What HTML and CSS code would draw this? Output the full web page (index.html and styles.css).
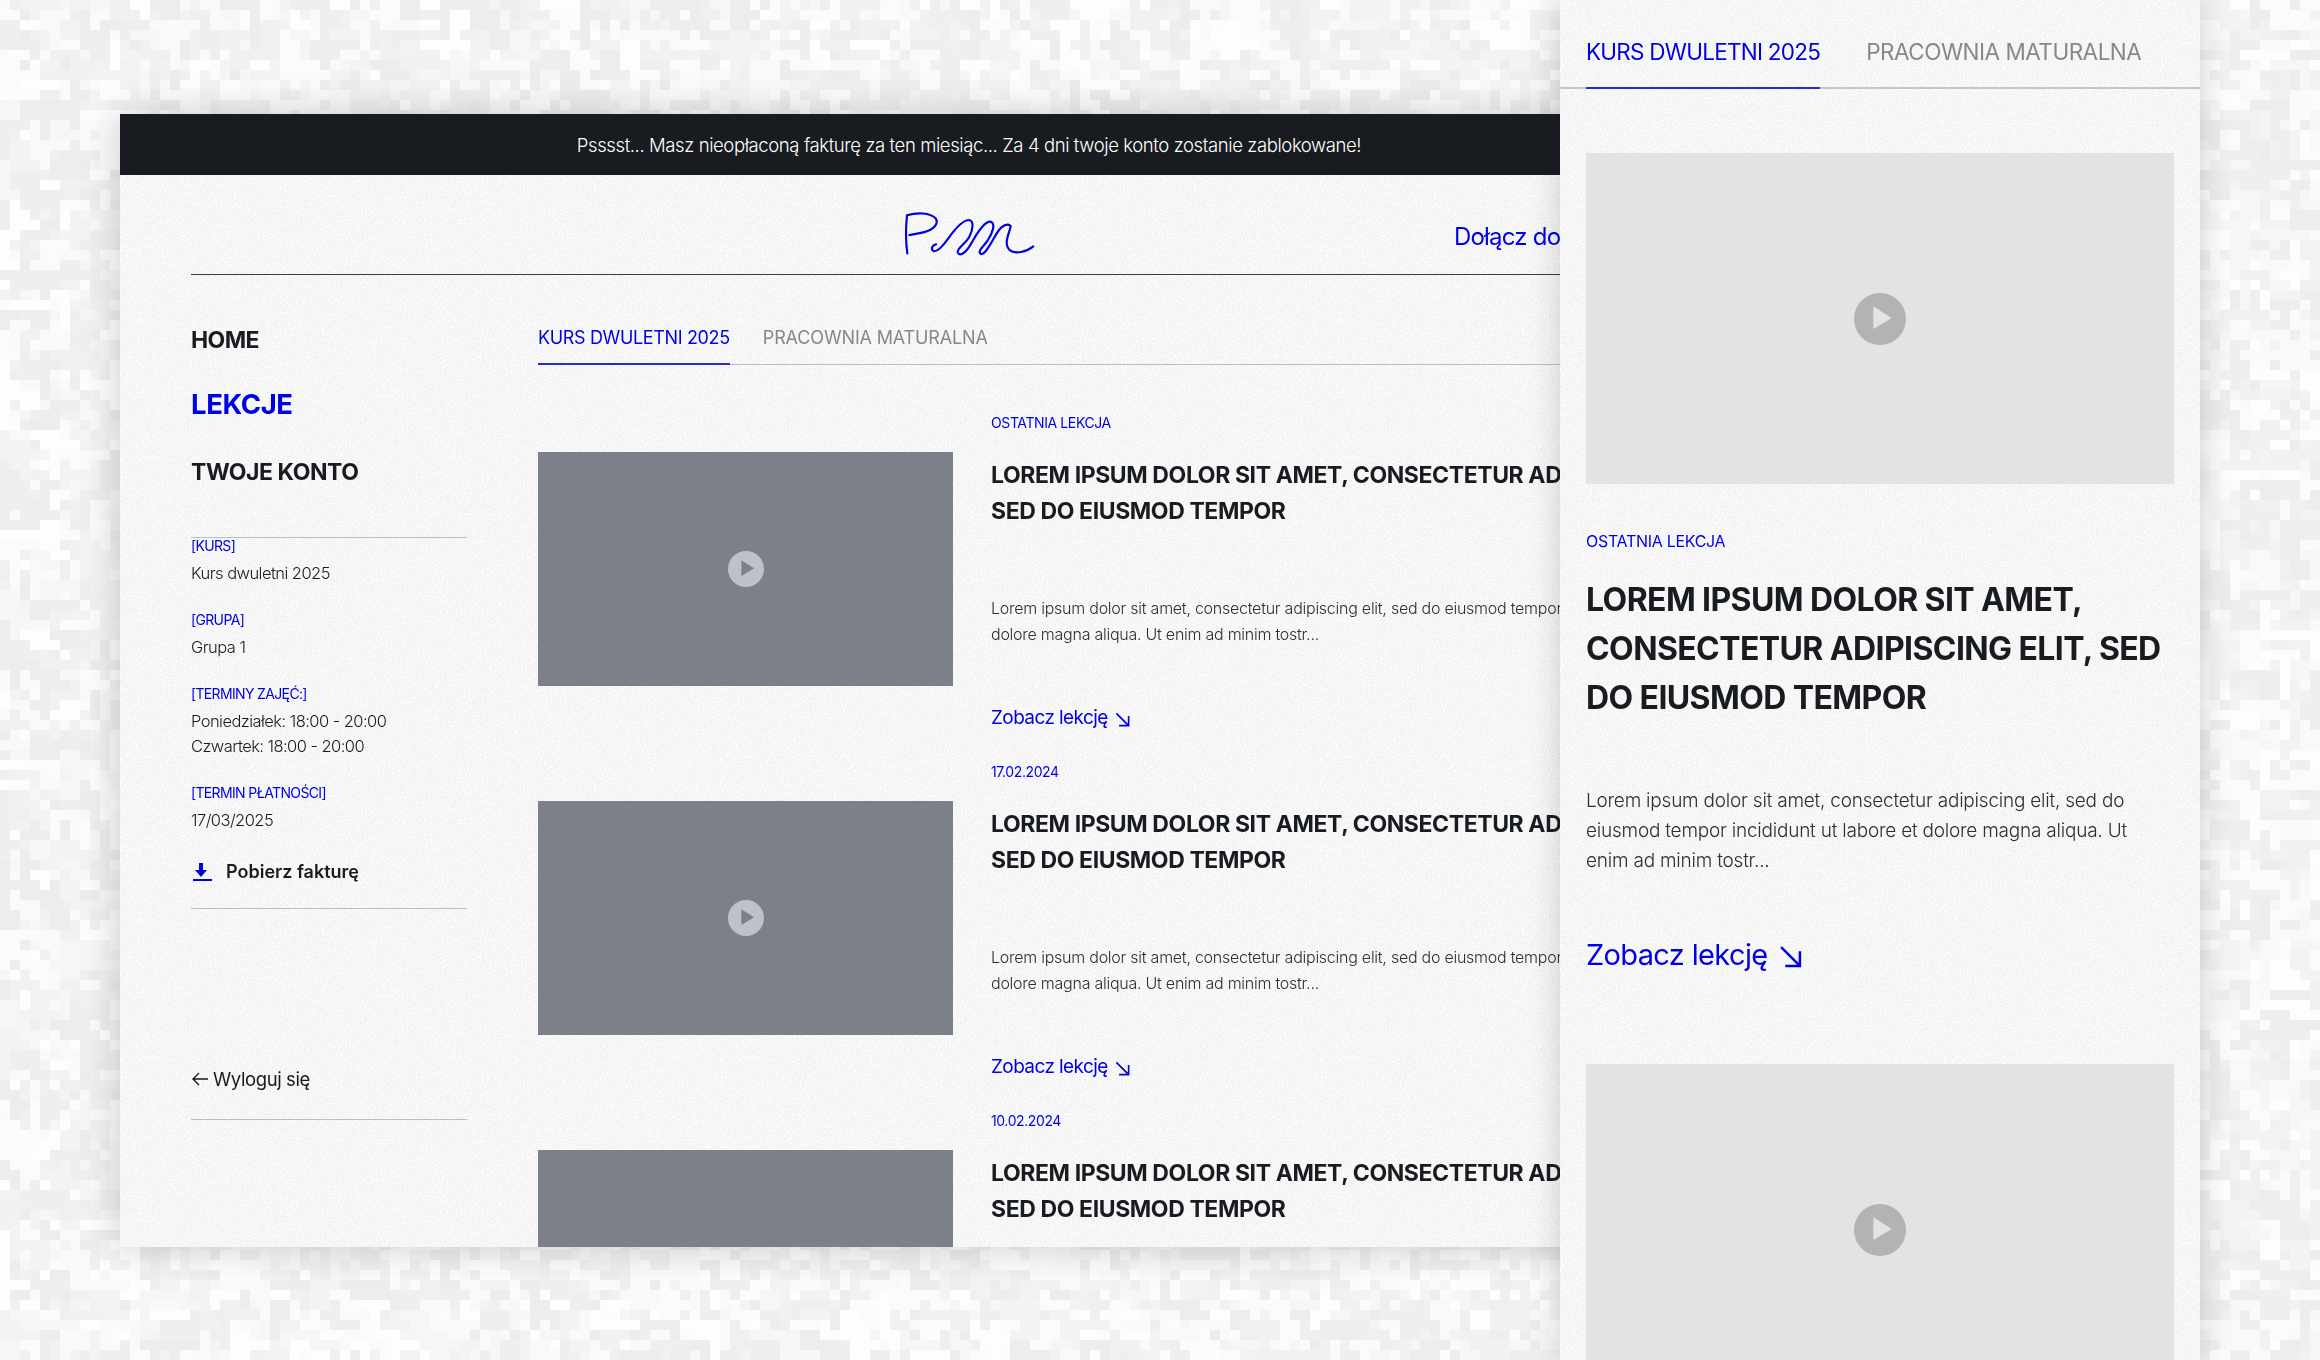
FILE: index.html
```html
<!DOCTYPE html>
<html lang="pl">
<head>
  <meta charset="UTF-8" />
  <title>Lekcje</title>
  <link rel="stylesheet" href="styles.css">
</head>
<body>
  <canvas class="mosaic" id="mosaic" width="2320" height="1360"></canvas>

  <svg class="icon-defs" width="0" height="0">
    <symbol id="play" viewBox="0 0 52 52">
      <circle class="play-disc" cx="26" cy="26" r="26" />
      <path class="play-tri" d="M19.3 13.3 L37.7 25 L19.3 36 Z" />
    </symbol>
    <symbol id="arrow-se" viewBox="0 0 22 22">
      <path d="M2 2 L20 20 M20 6 V20 H6" fill="none" stroke="currentColor" stroke-width="2.4" />
    </symbol>
  </svg>

  <!-- Desktop window -->
  <div class="desktop">
    <div class="banner">Psssst... Masz nieopłaconą fakturę za ten miesiąc... Za 4 dni twoje konto zostanie zablokowane!</div>

    <header class="top-bar">
      <span></span>
      <svg class="logo" viewBox="0 0 420 180" width="140" height="60">
        <path d="M22 145 C17 110 17 70 21 31 C50 22 90 22 107 40 C118 56 100 75 70 82 C55 86 40 88 28 90" />
        <path d="M108 118 C96 120 92 132 100 138 C110 142 125 128 145 100 C165 72 190 45 207 45 C222 47 220 72 208 95 C195 118 170 130 173 142 C180 158 200 142 218 108 C235 78 255 48 272 50 C288 55 278 85 262 108 C245 130 232 140 243 147 C256 150 275 110 292 82 C305 62 325 52 332 64 C328 85 310 115 328 134 C345 150 380 140 400 124" />
      </svg>
      <a class="join-link" href="#">Dołącz do</a>
    </header>

    <div class="layout">
      <aside class="sidebar">
        <nav class="side-nav">
          <a class="nav-home" href="#">HOME</a>
          <a class="nav-lessons" href="#">LEKCJE</a>
          <a class="nav-account" href="#">TWOJE KONTO</a>
        </nav>

        <div class="account-box">
          <div class="info-label">[KURS]</div>
          <div class="info-value">Kurs dwuletni 2025</div>
          <div class="info-label">[GRUPA]</div>
          <div class="info-value">Grupa 1</div>
          <div class="info-label">[TERMINY ZAJĘĆ:]</div>
          <div class="info-value">Poniedziałek: 18:00 - 20:00<br>Czwartek: 18:00 - 20:00</div>
          <div class="info-label">[TERMIN PŁATNOŚCI]</div>
          <div class="info-value">17/03/2025</div>
          <a class="invoice" href="#">
            <svg class="invoice-icon" viewBox="0 0 20 20" width="20" height="20">
              <path d="M6 1 H10 V8 H14 L8 15 L2 8 H6 Z" />
              <rect x="0" y="17" width="19" height="2" />
            </svg>
            Pobierz fakturę
          </a>
        </div>

        <a class="logout" href="#">
          <svg class="logout-icon" viewBox="0 0 16 14" width="16" height="14">
            <path d="M16 7 H1 M7 1 L1 7 L7 13" />
          </svg>
          Wyloguj się
        </a>
      </aside>

      <main class="lessons">
        <div class="tabs">
          <a class="tab active" href="#">KURS DWULETNI 2025</a>
          <a class="tab" href="#">PRACOWNIA MATURALNA</a>
        </div>

        <article class="lesson">
          <div class="thumb"><svg class="thumb-play"><use href="#play" /></svg></div>
          <div class="lesson-text">
            <div class="lesson-date">OSTATNIA LEKCJA</div>
            <h2 class="lesson-title">LOREM IPSUM DOLOR SIT AMET, CONSECTETUR ADIPISCING ELIT,<br>SED DO EIUSMOD TEMPOR</h2>
            <p class="lesson-desc">Lorem ipsum dolor sit amet, consectetur adipiscing elit, sed do eiusmod tempor incididunt ut labore et<br>dolore magna aliqua. Ut enim ad minim tostr...</p>
            <a class="lesson-link" href="#">Zobacz lekcję <svg class="link-arrow"><use href="#arrow-se" /></svg></a>
          </div>
        </article>

        <article class="lesson">
          <div class="thumb"><svg class="thumb-play"><use href="#play" /></svg></div>
          <div class="lesson-text">
            <div class="lesson-date">17.02.2024</div>
            <h2 class="lesson-title">LOREM IPSUM DOLOR SIT AMET, CONSECTETUR ADIPISCING ELIT,<br>SED DO EIUSMOD TEMPOR</h2>
            <p class="lesson-desc">Lorem ipsum dolor sit amet, consectetur adipiscing elit, sed do eiusmod tempor incididunt ut labore et<br>dolore magna aliqua. Ut enim ad minim tostr...</p>
            <a class="lesson-link" href="#">Zobacz lekcję <svg class="link-arrow"><use href="#arrow-se" /></svg></a>
          </div>
        </article>

        <article class="lesson">
          <div class="thumb"><svg class="thumb-play"><use href="#play" /></svg></div>
          <div class="lesson-text">
            <div class="lesson-date">10.02.2024</div>
            <h2 class="lesson-title">LOREM IPSUM DOLOR SIT AMET, CONSECTETUR ADIPISCING ELIT,<br>SED DO EIUSMOD TEMPOR</h2>
          </div>
        </article>
      </main>
    </div>
  </div>

  <!-- Mobile window -->
  <div class="mobile">
    <div class="mobile-tabs">
      <a class="mobile-tab active" href="#">KURS DWULETNI 2025</a>
      <a class="mobile-tab" href="#">PRACOWNIA MATURALNA</a>
    </div>

    <div class="mobile-body">
      <div class="mobile-thumb"><svg class="mobile-play"><use href="#play" /></svg></div>
      <div class="mobile-date">OSTATNIA LEKCJA</div>
      <h2 class="mobile-title">LOREM IPSUM DOLOR SIT AMET, CONSECTETUR ADIPISCING ELIT, SED DO EIUSMOD TEMPOR</h2>
      <p class="mobile-desc">Lorem ipsum dolor sit amet, consectetur adipiscing elit, sed do eiusmod tempor incididunt ut labore et dolore magna aliqua. Ut enim ad minim tostr...</p>
      <a class="mobile-link" href="#">Zobacz lekcję <svg class="mobile-arrow"><use href="#arrow-se" /></svg></a>
      <div class="mobile-thumb"><svg class="mobile-play"><use href="#play" /></svg></div>
    </div>
  </div>

  <script src="mosaic.js"></script>
</body>
</html>
```

FILE: styles.css
```css
* {
  box-sizing: border-box;
}

html,
body {
  margin: 0;
  height: 100%;
}

body {
  position: relative;
  width: 2320px;
  height: 1360px;
  overflow: hidden;
  background: #f6f6f6;
  font-family: Inter, 'Liberation Sans', sans-serif;
  color: #181b20;
}

a {
  color: inherit;
  text-decoration: none;
}

.mosaic {
  position: absolute;
  top: 0;
  left: 0;
}

.icon-defs {
  position: absolute;
}

.play-disc {
  fill: var(--play-disc);
}

.play-tri {
  fill: var(--play-tri);
}

/* paper grain on both windows */
.desktop,
.mobile {
  background-color: #f2f2f2;
  background-image: url("data:image/svg+xml,%3Csvg xmlns='http://www.w3.org/2000/svg' width='300' height='300'%3E%3Cfilter id='n'%3E%3CfeTurbulence type='fractalNoise' baseFrequency='0.55' numOctaves='2' stitchTiles='stitch'/%3E%3CfeColorMatrix values='0 0 0 0 1 0 0 0 0 1 0 0 0 0 1 0 0 0 2.2 -0.8'/%3E%3C/filter%3E%3Crect width='300' height='300' filter='url(%23n)'/%3E%3C/svg%3E");
}

/* desktop window */
.desktop {
  position: absolute;
  top: 114px;
  left: 120px;
  width: 1698px;
  height: 1133px;
  overflow: hidden;
  box-shadow: 0 0 36px rgba(30, 32, 36, 0.22);
}

.banner {
  height: 61px;
  line-height: 63px;
  text-align: center;
  background: #181b20;
  color: #fff;
  font-size: 18.5px;
  font-weight: 300;
  letter-spacing: -0.4px;
}

.top-bar {
  display: grid;
  grid-template-columns: 1fr auto 1fr;
  align-items: center;
  height: 100px;
  margin: 0 71px;
  padding-top: 20px;
  border-bottom: 1px solid #3a3d44;
}

.logo {
  margin-left: 2px;
  fill: none;
  stroke: #0000e0;
  stroke-width: 6.5;
  stroke-linecap: round;
  stroke-linejoin: round;
}

.join-link {
  margin-left: 414px;
  margin-top: 4px;
  color: #0000e6;
  font-size: 24px;
  letter-spacing: -0.8px;
  white-space: nowrap;
}

.layout {
  display: grid;
  grid-template-columns: 276px 1fr;
  column-gap: 71px;
  margin: 0 71px;
}

/* sidebar */
.sidebar {
  padding-top: 50px;
}

.side-nav a {
  display: block;
  font-weight: 700;
  white-space: nowrap;
}

.nav-home {
  font-size: 23px;
  line-height: 30px;
  letter-spacing: -0.6px;
}

.nav-lessons {
  margin-top: 32px;
  font-size: 27.5px;
  line-height: 34px;
  letter-spacing: -0.4px;
  color: #0000e6;
}

.nav-account {
  margin-top: 36px;
  font-size: 23px;
  line-height: 30px;
  letter-spacing: -0.45px;
}

.account-box {
  margin-top: 50px;
  padding-bottom: 24px;
  border-top: 1px solid #bdbec1;
  border-bottom: 1px solid #bdbec1;
}

.info-label {
  margin-top: 26px;
  font-size: 14px;
  line-height: 15px;
  letter-spacing: -0.65px;
  color: #0000e6;
}

.info-label:first-child {
  margin-top: 0;
}

.info-value {
  margin-top: 8px;
  font-size: 16.5px;
  font-weight: 350;
  line-height: 25px;
  letter-spacing: -0.55px;
}

.invoice {
  display: flex;
  align-items: center;
  gap: 13px;
  margin-top: 27px;
  font-size: 18px;
  font-weight: 600;
  line-height: 24px;
}

.invoice-icon {
  margin-left: 2px;
  fill: #0000e6;
}

.logout {
  display: flex;
  align-items: center;
  gap: 5px;
  margin-top: 158px;
  padding-bottom: 28px;
  border-bottom: 1px solid #bdbec1;
  font-size: 18.5px;
  line-height: 24px;
  letter-spacing: -0.4px;
}

.logout-icon {
  margin-left: 1px;
  fill: none;
  stroke: #181b20;
  stroke-width: 1.4;
}

/* lessons column */
.lessons {
  padding-top: 51px;
}

.tabs {
  display: flex;
  gap: 33px;
  margin-right: -71px;
  border-bottom: 1px solid #bdbec1;
}

.tab {
  height: 39px;
  margin-bottom: -1px;
  padding-bottom: 15px;
  font-size: 18px;
  line-height: 24px;
  color: #85878b;
  letter-spacing: -0.15px;
  white-space: nowrap;
}

.tab.active {
  color: #0000e6;
  border-bottom: 2px solid #2a2ad0;
  letter-spacing: -0.35px;
}

.lesson {
  --play-disc: #bfc1c6;
  --play-tri: #7c8088;
  display: grid;
  grid-template-columns: 415px 1fr;
  column-gap: 38px;
  height: 349px;
}

.lessons .tabs + .lesson {
  margin-top: 49px;
}

.thumb {
  display: flex;
  align-items: center;
  justify-content: center;
  height: 234px;
  margin-top: 38px;
  background: #7c8088;
}

.thumb-play {
  width: 36px;
  height: 36px;
}

.lesson-date {
  font-size: 14px;
  line-height: 18px;
  color: #0000e6;
  letter-spacing: -0.4px;
}

.lesson-title {
  margin: 25px 0 0;
  font-size: 23px;
  font-weight: 700;
  line-height: 36px;
  letter-spacing: -0.4px;
  white-space: nowrap;
}

.lesson-desc {
  margin: 66px 0 0;
  font-size: 16px;
  font-weight: 350;
  line-height: 26px;
  color: #2c2f34;
  letter-spacing: -0.25px;
  white-space: nowrap;
}

.lesson-link {
  display: inline-flex;
  align-items: center;
  margin-top: 59px;
  gap: 7px;
  color: #0000e6;
  font-size: 19px;
  line-height: 24px;
  letter-spacing: -0.6px;
}

.link-arrow {
  width: 15px;
  height: 15px;
  margin-top: 3px;
}

/* mobile window */
.mobile {
  --play-disc: #b3b3b3;
  --play-tri: #e3e3e3;
  position: absolute;
  top: 0;
  left: 1560px;
  width: 640px;
  height: 1360px;
  overflow: hidden;
  box-shadow: 0 0 30px rgba(30, 32, 36, 0.2);
}

.mobile-tabs {
  display: flex;
  gap: 46px;
  padding: 40px 0 0 26px;
  border-bottom: 2px solid #c4c5c8;
}

.mobile-tab {
  height: 49px;
  margin-bottom: -2px;
  padding-bottom: 23px;
  font-size: 22.5px;
  line-height: 24px;
  color: #85878b;
  letter-spacing: -0.5px;
  white-space: nowrap;
}

.mobile-tab.active {
  color: #0000e6;
  border-bottom: 2px solid #2a2ad0;
  letter-spacing: -0.75px;
}

.mobile-body {
  padding: 64px 26px 0;
}

.mobile-thumb {
  display: flex;
  align-items: center;
  justify-content: center;
  height: 331px;
  background: #e3e3e3;
}

.mobile-play {
  width: 52px;
  height: 52px;
}

.mobile-date {
  margin-top: 47px;
  font-size: 16px;
  line-height: 20px;
  color: #0000e6;
  letter-spacing: -0.3px;
}

.mobile-title {
  margin: 24px 0 0;
  font-size: 32px;
  font-weight: 700;
  line-height: 49px;
  letter-spacing: -0.6px;
}

.mobile-desc {
  margin: 64px 0 0;
  font-size: 19px;
  font-weight: 350;
  line-height: 30px;
  color: #2c2f34;
  letter-spacing: -0.22px;
}

.mobile-link {
  display: flex;
  align-items: center;
  gap: 11px;
  height: 36px;
  margin: 61px 0 91px;
  color: #0000e6;
  font-size: 29px;
  line-height: 36px;
  letter-spacing: -0.65px;
}

.mobile-arrow {
  width: 23px;
  height: 23px;
  margin-top: 3px;
}
```

FILE: mosaic.js
```js
// pixel mosaic behind the two windows
const canvas = document.getElementById('mosaic');
const ctx = canvas.getContext('2d');
const cell = 10;
const cols = canvas.width / cell;
const rows = canvas.height / cell;

let seed = 20250317;
function rand() {
  seed = (seed * 1664525 + 1013904223) % 4294967296;
  return seed / 4294967296;
}

const shades = ['#fdfdfd', '#fbfbfb', '#f9f9f9', '#f6f6f6', '#f3f3f3', '#f1f1f1', '#efefef', '#ededed'];
const grid = [];

for (let r = 0; r < rows; r++) {
  grid[r] = [];
  for (let c = 0; c < cols; c++) {
    // copy a neighbour now and then so cells clump into blocks
    const pick = rand();
    let shade = shades[Math.floor(rand() * shades.length)];
    if (pick < 0.28 && c > 0) shade = grid[r][c - 1];
    else if (pick < 0.52 && r > 0) shade = grid[r - 1][c];
    grid[r][c] = shade;
    ctx.fillStyle = shade;
    ctx.fillRect(c * cell, r * cell, cell, cell);
  }
}
```
